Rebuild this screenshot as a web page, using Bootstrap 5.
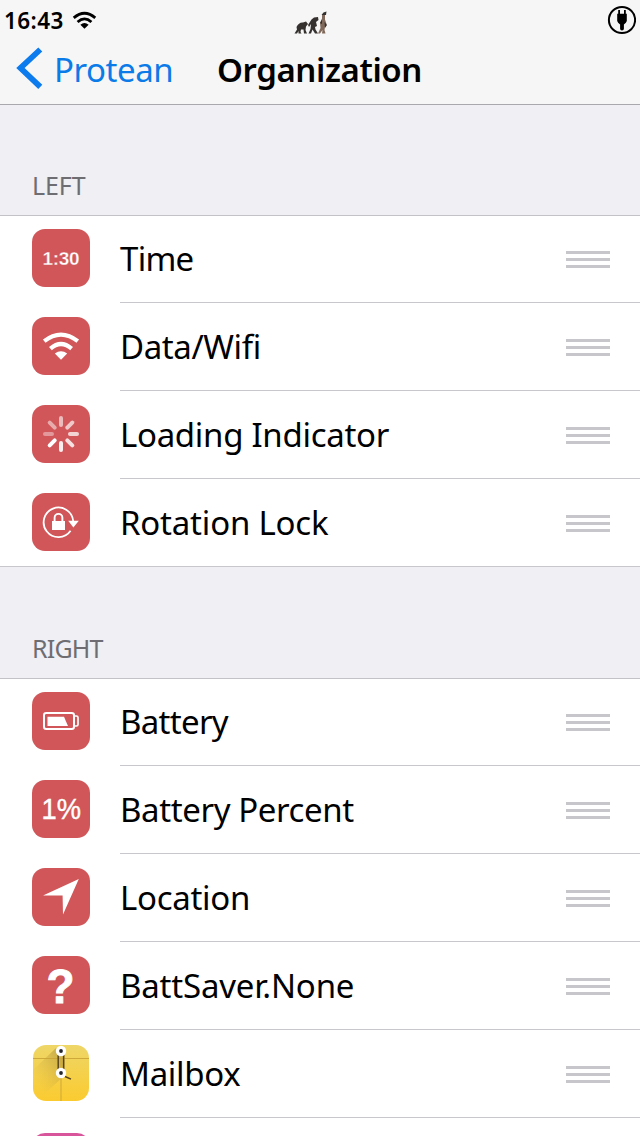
<!DOCTYPE html>
<html lang="en">
<head>
<meta charset="utf-8">
<meta name="viewport" content="width=device-width, initial-scale=1">
<title>Organization</title>
<link rel="stylesheet" href="https://cdn.jsdelivr.net/npm/bootstrap@5.3.0/dist/css/bootstrap.min.css">
<style>
  body { font-family: "Noto Sans", "Open Sans", sans-serif; background: #efeff4; color: #000; }
  main { height: 1031px; }
  .topbar { height: 105px; background: #f6f6f6; border-bottom: 1px solid #a9a9ad; }
  .statusline { height: 40px; }
  .clock { font-size: 22.5px; font-weight: 600; line-height: 40px; padding: 1px 0 0 4px; width: 72px; letter-spacing: .4px; }
  .apes { left: 294px; top: 11px; }
  .titleline { height: 60px; }
  .back-label { color: #0b7be8; font-size: 33px; line-height: 60px; left: 54px; top: 0; letter-spacing: -.45px; }
  .chevron { left: 16px; top: 7px; }
  .heading { font-size: 33px; line-height: 60px; font-weight: 600; left: 217px; top: 0; letter-spacing: -.4px; }
  .group-label { height: 110px; padding: 0 0 13px 32px; font-size: 25px; line-height: 34px; color: #6d6d72; letter-spacing: -.1px; }
  .group-label.tall { height: 111px; letter-spacing: -.8px; }
  .cells { background: #fff; box-shadow: inset 0 1px #c3c3c7; }
  .cell { height: 88px; }
  .cell-icon { width: 120px; padding: 14px 0 0 32px; }
  .cell-icon svg { display: block; width: 58px; height: 58px; }
  .cell-body { border-bottom: 1px solid #c8c7cc; padding-right: 30px; font-size: 33px; white-space: nowrap; }
  .track-a { letter-spacing: -.2px; }
  .track-b { letter-spacing: -.3px; }
  .track-c { letter-spacing: -.4px; }
  .track-d { letter-spacing: -.7px; }
  .cells.closed .cell:last-child { box-shadow: inset 0 -1px #c8c7cc; }
  .grip { width: 44px; margin-top: 1px; gap: 4px; }
  .grip i { height: 3px; background: #c7c7cb; }
  svg text { font-family: "Liberation Sans", sans-serif; fill: #fff; }
</style>
</head>
<body>
<header class="topbar">
  <div class="statusline d-flex align-items-center position-relative">
    <span class="clock flex-shrink-0">16:43</span>
    <svg width="25" height="19" viewBox="0 0 26 19" fill="none" stroke="#000" stroke-width="2.9"><path d="M1.8 6.8Q13-2.8 24.2 6.8M5.8 11Q13 4.6 20.2 11"/><path d="M8.7 14Q13 10.4 17.3 14L13 18.2Z" fill="#000" stroke="none"/></svg>
    <svg class="apes position-absolute" width="34" height="24" viewBox="0 0 34 24" fill="#35312e">
      <path d="M.5 22.5L3 18.5 2.5 16Q5 11 9 11.5L12 10.5 14 13 12 15.5 11.5 19 13 22.5H10L9.5 18.5 7 18.5 6.5 21 7.5 22.5H4.5L4.5 20 3 22.5Z"/>
      <path d="M14 14L17.5 8.5 20 6.5 24 6 24.5 9 22 11 23 15 21 16 21.5 18.5 24 22.5H21L18.5 18.5 17 22.5H14.5L16.5 18 17 13 15 16Z"/>
      <path d="M26 12L28 7.5 28 4 31 4 31 8.5 32.5 13 31 16 30.5 19 31.5 22.5H28L28.5 19 26 22.5H24L26.5 17Z" fill="#80695a"/>
      <path d="M27.5 4L29.5 1.5 32.5 .5 32 4ZM26 12L28 8.5 28 13ZM30.5 11L33 14 31 17Z"/>
    </svg>
    <svg class="ms-auto me-1" width="32" height="32" viewBox="0 0 32 32"><circle cx="18" cy="16" r="13.1" fill="none" stroke="#000" stroke-width="2"/><path d="M14.2 6h1.8v3.7h4V6h1.8v3.7h1v7.3q-.4 2-2.9 3.4v4.4q0 1.8-1.9 1.8t-1.9-1.8v-4.4q-2.5-1.4-2.9-3.4V9.700h1Z"/></svg>
  </div>
  <div class="titleline position-relative">
    <svg class="chevron position-absolute" width="28" height="44" viewBox="0 0 28 44"><path d="M24.300 2.500L4.500 21 24.300 39.800" fill="none" stroke="#0b7bee" stroke-width="5.800"/></svg>
    <a class="back-label position-absolute text-decoration-none" href="#">Protean</a>
    <h1 class="heading position-absolute m-0">Organization</h1>
  </div>
</header>
<main class="overflow-hidden">
  <div class="group-label d-flex align-items-end">LEFT</div>
  <section class="cells closed">
    <div class="cell d-flex"><div class="cell-icon"><svg viewBox="0 0 58 58"><rect width="58" height="58" rx="13" fill="#d05659"/><text x="10.500" y="36" font-size="19" font-weight="700" textLength="37" stroke="#d05659" stroke-width=".3">1:30</text></svg></div><div class="cell-body flex-fill d-flex align-items-center justify-content-between"><span class="track-d">Time</span><span class="grip d-flex flex-column"><i></i><i></i><i></i></span></div></div>
    <div class="cell d-flex"><div class="cell-icon"><svg viewBox="0 0 58 58"><rect width="58" height="58" rx="13" fill="#d05659"/><path d="M12.200 24.200Q29 11.200 45.800 24.200M18.400 31.600Q29 22.400 39.600 31.600" fill="none" stroke="#fff" stroke-width="4.200"/><path d="M22.800 36.500Q29 31.800 35.200 36.500L29 42.700Z" fill="#fff"/></svg></div><div class="cell-body flex-fill d-flex align-items-center justify-content-between"><span class="track-c">Data/Wifi</span><span class="grip d-flex flex-column"><i></i><i></i><i></i></span></div></div>
    <div class="cell d-flex"><div class="cell-icon"><svg viewBox="0 0 58 58"><rect width="58" height="58" rx="13" fill="#d05659"/><g fill="none" stroke="#fff" stroke-width="4" stroke-linecap="round"><path d="M29 13v7" opacity=".6"/><path d="M40.300 17.700l-5 5" opacity=".68"/><path d="M45 29h-7" opacity=".75"/><path d="M40.300 40.300l-5-5" opacity=".82"/><path d="M29 45v-7" opacity=".9"/><path d="M17.700 40.300l5-5"/><path d="M13 29h7" opacity=".4"/><path d="M17.700 17.700l5 5" opacity=".5"/></g></svg></div><div class="cell-body flex-fill d-flex align-items-center justify-content-between"><span class="track-b">Loading Indicator</span><span class="grip d-flex flex-column"><i></i><i></i><i></i></span></div></div>
    <div class="cell d-flex"><div class="cell-icon"><svg viewBox="0 0 58 58"><rect width="58" height="58" rx="13" fill="#d05659"/><path d="M41.200 28A14.800 14.800 0 1 0 38.600 37.800" fill="none" stroke="#fff" stroke-width="1.800"/><path d="M36.200 27.800h10.600l-5.400 6.600Z" fill="#fff"/><path d="M20 28h13v9H20Z" fill="#fff"/><path d="M22.600 29v-4.200a3.900 3.900 0 0 1 7.800 0V29" fill="none" stroke="#fff" stroke-width="1.900"/></svg></div><div class="cell-body flex-fill d-flex align-items-center justify-content-between"><span class="track-a">Rotation Lock</span><span class="grip d-flex flex-column"><i></i><i></i><i></i></span></div></div>
  </section>
  <div class="group-label tall d-flex align-items-end">RIGHT</div>
  <section class="cells">
    <div class="cell d-flex"><div class="cell-icon"><svg viewBox="0 0 58 58"><rect width="58" height="58" rx="13" fill="#d05659"/><rect x="12" y="21" width="30" height="16" rx="2.200" fill="none" stroke="#fff" stroke-width="2"/><path d="M15.500 24.700h16.500l4 9.200H15.500Z" fill="#fff"/><path d="M42 24h2.400q1.600 0 1.600 1.600v6.800q0 1.600-1.600 1.600H42" fill="none" stroke="#fff" stroke-width="1.700"/></svg></div><div class="cell-body flex-fill d-flex align-items-center justify-content-between"><span class="track-d">Battery</span><span class="grip d-flex flex-column"><i></i><i></i><i></i></span></div></div>
    <div class="cell d-flex"><div class="cell-icon"><svg viewBox="0 0 58 58"><rect width="58" height="58" rx="13" fill="#d05659"/><text x="9.500" y="38.500" font-size="29" textLength="39.500" lengthAdjust="spacingAndGlyphs" stroke="#fff" stroke-width=".4">1%</text></svg></div><div class="cell-body flex-fill d-flex align-items-center justify-content-between"><span class="track-c">Battery Percent</span><span class="grip d-flex flex-column"><i></i><i></i><i></i></span></div></div>
    <div class="cell d-flex"><div class="cell-icon"><svg viewBox="0 0 58 58"><rect width="58" height="58" rx="13" fill="#d05659"/><path d="M46.800 11L11 27.400H30.600L31 46.500Z" fill="#fff"/></svg></div><div class="cell-body flex-fill d-flex align-items-center justify-content-between"><span class="track-b">Location</span><span class="grip d-flex flex-column"><i></i><i></i><i></i></span></div></div>
    <div class="cell d-flex"><div class="cell-icon"><svg viewBox="0 0 58 58"><rect width="58" height="58" rx="13" fill="#d05659"/><text x="14.500" y="46.500" font-size="49" font-weight="700" textLength="28" lengthAdjust="spacingAndGlyphs" stroke="#fff" stroke-width="1">?</text></svg></div><div class="cell-body flex-fill d-flex align-items-center justify-content-between"><span class="track-a">BattSaver.None</span><span class="grip d-flex flex-column"><i></i><i></i><i></i></span></div></div>
    <div class="cell d-flex"><div class="cell-icon"><svg viewBox="0 0 58 58">
      <defs><linearGradient id="env" x2="0" y2="1"><stop offset="0" stop-color="#eed667"/><stop offset="1" stop-color="#fbcb30"/></linearGradient><linearGradient id="shade" x1="1" x2="0" y2="1"><stop offset=".2" stop-color="#b3973c" stop-opacity=".55"/><stop offset=".8" stop-color="#d8b540" stop-opacity="0"/></linearGradient></defs>
      <rect x="1" y="1" width="56" height="56" rx="13" fill="url(#env)"/><path d="M24 4L1 26V50L8 54 33 31V8Z" fill="url(#shade)"/><path d="M1 14.500H57M29 15V57" stroke="#c9a436" stroke-width=".9" fill="none"/>
      <path d="M26.200 11v16M31.600 11v16M33 32.500l6 2.600" stroke="#54401c" stroke-width="1.400"/><circle cx="29" cy="7" r="5.200" fill="#fff"/><circle cx="29" cy="29" r="5.200" fill="#fff"/><circle cx="29" cy="7" r="1.900" fill="#23262c"/><circle cx="29" cy="29" r="1.900" fill="#23262c"/></svg></div><div class="cell-body flex-fill d-flex align-items-center justify-content-between"><span class="track-b">Mailbox</span><span class="grip d-flex flex-column"><i></i><i></i><i></i></span></div></div>
    <div class="cell d-flex"><div class="cell-icon"><svg viewBox="0 0 58 58"><rect y="1" width="58" height="57" rx="13" fill="#d9559b"/></svg></div><div class="cell-body flex-fill"></div></div>
  </section>
</main>
<script src="https://cdn.jsdelivr.net/npm/bootstrap@5.3.0/dist/js/bootstrap.bundle.min.js"></script>
</body>
</html>
